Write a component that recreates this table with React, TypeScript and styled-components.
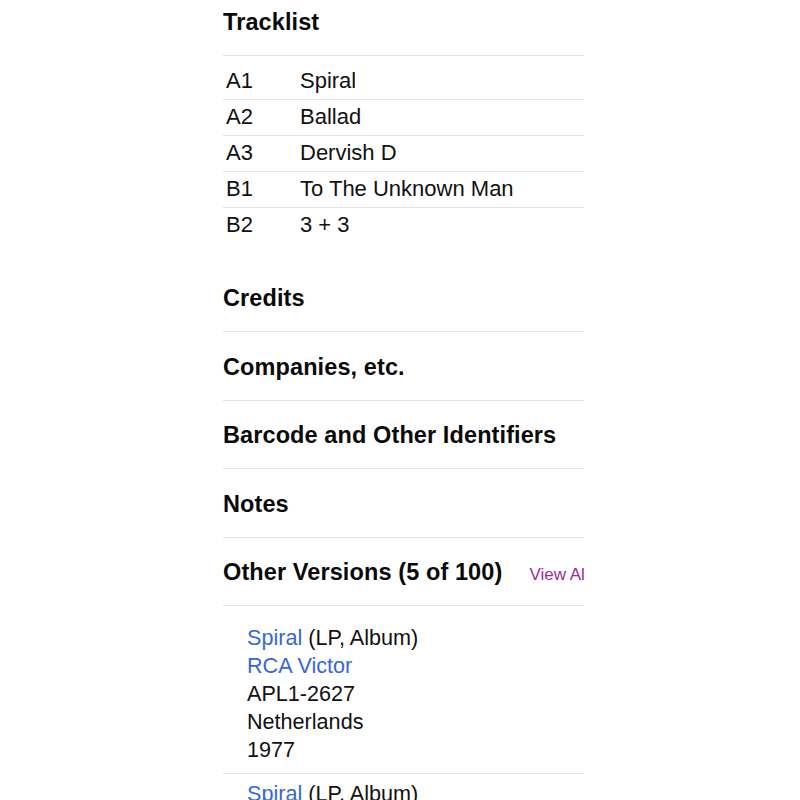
import styled, { createGlobalStyle } from "styled-components"

const GlobalStyle = createGlobalStyle`
    html, body { margin: 0; padding: 0; background: #fff; }
    body {
        font-family: "Liberation Sans", Arial, Helvetica, sans-serif;
        color: #111;
        overflow: hidden;
    }
`

type Track = { pos: string; title: string }
type Version = { title: string; format: string; label: string; cat: string; country: string; year: string }

const tracks: Track[] = [
    { pos: 'A1', title: 'Spiral' },
    { pos: 'A2', title: 'Ballad' },
    { pos: 'A3', title: 'Dervish D' },
    { pos: 'B1', title: 'To The Unknown Man' },
    { pos: 'B2', title: '3 + 3' },
]

const versions: Version[] = [
    { title: 'Spiral', format: '(LP, Album)', label: 'RCA Victor', cat: 'APL1-2627', country: 'Netherlands', year: '1977' },
    { title: 'Spiral', format: '(LP, Album)', label: 'RCA Victor', cat: 'PL 25116', country: 'UK', year: '1977' },
]

const Page = styled.div`
    width: 361px;
    margin: -13px 0 0 223px;
`
const SectionHeader = styled.div`
    display: flex;
    align-items: baseline;
    gap: 27px;
    height: 68.5px;
    padding-top: 21.5px;
    box-sizing: border-box;
    border-bottom: 1px solid #e4e4e4;
    overflow: hidden;
    white-space: nowrap;
`
const Spaced = styled.div`margin-top: 21px;`
const Heading = styled.h2`
    margin: 0;
    font-size: 23.5px;
    font-weight: 700;
    color: #0a0a0a;
    letter-spacing: 0.1px;
`
const ViewAll = styled.a`
    font-size: 17px;
    color: #9c2a96;
    text-decoration: none;
`
const TrackTable = styled.div`
    margin-top: 8px;
`
const TrackRow = styled.div`
    display: grid;
    grid-template-columns: 77px 1fr;
    align-items: center;
    height: 35px;
    font-size: 22px;
    border-bottom: 1px solid #e4e4e4;
    &:last-child { border-bottom: none; }
`
const Pos = styled.span`padding-left: 3px;`
const VersionList = styled.div`margin-top: 12px;`
const VersionItem = styled.div`
    padding: 6px 0 9px 24px;
    font-size: 21.6px;
    line-height: 28px;
    border-bottom: 1px solid #e4e4e4;
`
const Line = styled.div``
const Link = styled.a`
    color: #3767d6;
    text-decoration: none;
`

export default function App() {
    return (
        <>
            <GlobalStyle />
            <Page>
                <SectionHeader>
                    <Heading>Tracklist</Heading>
                </SectionHeader>
                <TrackTable>
                    {tracks.map(t => (
                        <TrackRow key={t.pos}>
                            <Pos>{t.pos}</Pos>
                            <span>{t.title}</span>
                        </TrackRow>
                    ))}
                </TrackTable>
                <Spaced />
                <SectionHeader><Heading>Credits</Heading></SectionHeader>
                <SectionHeader><Heading>Companies, etc.</Heading></SectionHeader>
                <SectionHeader><Heading>Barcode and Other Identifiers</Heading></SectionHeader>
                <SectionHeader><Heading>Notes</Heading></SectionHeader>
                <SectionHeader>
                    <Heading>Other Versions (5 of 100)</Heading>
                    <ViewAll href="#">View All</ViewAll>
                </SectionHeader>
                <VersionList>
                    {versions.map((v, i) => (
                        <VersionItem key={i}>
                            <Line><Link href="#">{v.title}</Link> {v.format}</Line>
                            <Line><Link href="#">{v.label}</Link></Line>
                            <Line>{v.cat}</Line>
                            <Line>{v.country}</Line>
                            <Line>{v.year}</Line>
                        </VersionItem>
                    ))}
                </VersionList>
            </Page>
        </>
    )
}
